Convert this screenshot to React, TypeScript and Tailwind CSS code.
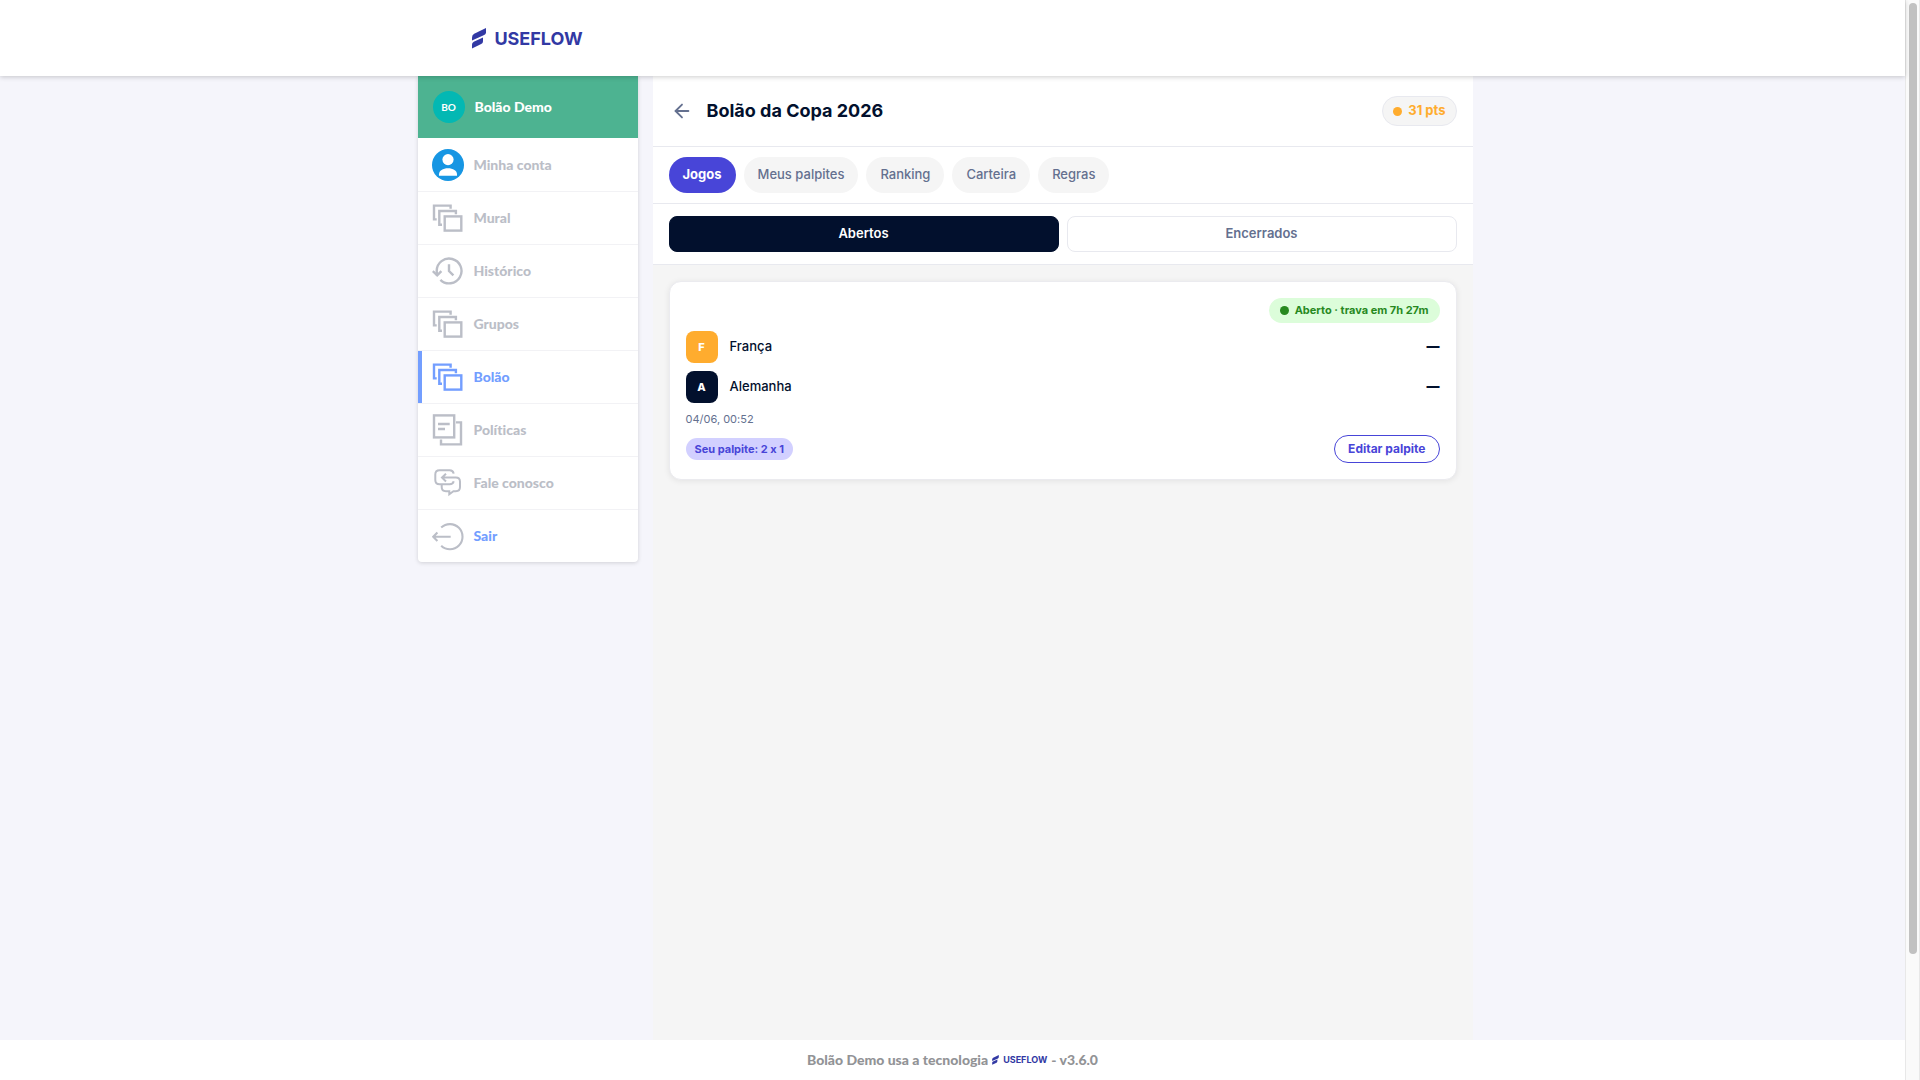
import { useState } from 'react'
import type { ReactNode } from 'react'
import { ArrowLeft } from 'lucide-react'
import clsx from 'clsx'

function LogoMark({ className }: { className?: string }) {
  return (
    <svg viewBox="0 0 14 21" className={className} fill="currentColor" aria-hidden>
      <path d="M0 12.6V9.4Q0 7 2.2 5.8L14 0v4.2Q14 6.2 12.2 7.1Z" />
      <path d="M0 20.6v-4Q0 14.6 1.8 13.7L11 9.4v3.8Q11 15.2 9.2 16.1Z" />
    </svg>
  )
}

function LineIcon({ children }: { children: ReactNode }) {
  return (
    <svg viewBox="0 0 32 32" className="size-8 shrink-0" fill="none" stroke="currentColor" strokeWidth="2.4" aria-hidden>
      {children}
    </svg>
  )
}

const stackIcon = (
  <LineIcon>
    <path d="M4.7 17.4H2V3.6h16.6v3.2" />
    <path d="M10 22.8H7.3V9h16.6v3.2" />
    <rect x="12.7" y="14.4" width="16.6" height="14.2" />
  </LineIcon>
)

const accountIcon = (
  <svg viewBox="0 0 32 32" className="size-8 shrink-0" aria-hidden>
    <circle cx="16" cy="16" r="16" fill="#1796e3" />
    <circle cx="16" cy="10.6" r="5.6" fill="#fff" />
    <path d="M7 26.8v-1.6c0-3.6 4-6 9-6s9 2.4 9 6v1.6z" fill="#fff" />
  </svg>
)

const historyIcon = (
  <LineIcon>
    <path d="M5 20.4 4.7 16A12.4 12.4 0 1 1 8.4 24.8" />
    <path d="M.8 16.2 5.2 20.4 9.4 16.2" />
    <path d="M17 9.3V16l4.4 4.4" />
  </LineIcon>
)

const policyIcon = (
  <LineIcon>
    <rect x="2" y="1.4" width="20.2" height="22" />
    <path d="M6 10h11.7M6 15h7M24 8.4h5v22H9v-5" />
  </LineIcon>
)

const chatIcon = (
  <LineIcon>
    <path
      strokeWidth="2"
      d="M21.7 6.6Q21 3.2 17.7 3.2H7.6Q3.3 3.2 3.3 7.4V13q0 4.3 4.3 4.3h10.1q3.3 0 4-3M14 6.8 10 10.6l4 3.8M10 10.6h13.8q4.2 0 4.2 4.2v5.3q0 4.2-4.2 4.2h-2.4l-4.1 2.9v-2.9h-3.4q-4.2 0-4.2-4.2v-2.8"
    />
  </LineIcon>
)

const exitIcon = (
  <LineIcon>
    <path strokeWidth="2.1" d="M9.2 7.6a12.6 12.6 0 1 1 0 18.2M18.7 16.7H1.4M5.4 12.4 1.2 16.7l4.2 4.3" />
  </LineIcon>
)

const menu = [
  { label: 'Minha conta', icon: accountIcon },
  { label: 'Mural', icon: stackIcon },
  { label: 'Histórico', icon: historyIcon },
  { label: 'Grupos', icon: stackIcon },
  { label: 'Bolão', icon: stackIcon, active: true },
  { label: 'Políticas', icon: policyIcon },
  { label: 'Fale conosco', icon: chatIcon },
  { label: 'Sair', icon: exitIcon, highlight: true },
]

const tabs = ['Jogos', 'Meus palpites', 'Ranking', 'Carteira', 'Regras']
const filters = ['Abertos', 'Encerrados']

const teams = [
  { name: 'França', initial: 'F', color: 'bg-[#ffac2e]' },
  { name: 'Alemanha', initial: 'A', color: 'bg-[#02102d]' },
]

function Header() {
  return (
    <header className="relative z-10 bg-white shadow-[0_1px_5px_rgba(0,0,0,0.2)]">
      <div className="mx-auto flex h-[76px] max-w-[1070px] items-center">
        <a href="#" className="flex w-[220px] items-center justify-center gap-2 pt-px text-[#3239a4]">
          <LogoMark className="h-[21px] w-[14px]" />
          <span className="text-lg font-bold">USEFLOW</span>
        </a>
      </div>
    </header>
  )
}

function Sidebar() {
  return (
    <nav className="w-[220px] shrink-0 self-start overflow-hidden rounded-b bg-white font-['Lato',sans-serif] text-sm font-black [font-variant-ligatures:none] shadow-[0_1px_4px_rgba(0,0,0,0.15)]">
      <div className="flex h-[62px] items-center gap-2.5 bg-[#4db391] px-[15px] text-white">
        <span className="flex size-8 items-center justify-center rounded-full bg-[#03b8b3] text-[10px] font-bold">BO</span>
        Bolão Demo
      </div>
      <ul className="pt-px">
        {menu.map((item) => (
          <li key={item.label} className="border-b border-[#f2f2f5] last:border-b-0">
            <a
              href="#"
              className={clsx(
                'flex h-[52px] items-center gap-2.5 border-l-4 pl-2.5',
                item.active ? 'border-[#739eff] text-[#739eff]' : 'border-transparent text-[#bbbec7]',
              )}
            >
              {item.icon}
              <span className={item.highlight ? 'text-[#739eff]' : undefined}>{item.label}</span>
            </a>
          </li>
        ))}
      </ul>
    </nav>
  )
}

function MatchCard() {
  return (
    <article className="rounded-xl border border-[#ebebef] bg-white p-4 shadow-[0_1px_6px_rgba(0,0,0,0.08)]">
      <div className="flex justify-end">
        <span className="flex h-[25px] items-center gap-1.5 rounded-full bg-[#dcfdda] px-[11px] text-[11px] font-bold text-[#27891f]">
          <span className="size-[9px] rounded-full bg-current" />
          Aberto · trava em 7h 27m
        </span>
      </div>
      <div className="mt-2 flex flex-col gap-2">
        {teams.map((team) => (
          <div key={team.name} className="flex items-center gap-3">
            <span
              className={clsx(
                'flex size-8 items-center justify-center rounded-lg text-[11px] font-extrabold text-white',
                team.color,
              )}
            >
              {team.initial}
            </span>
            <span className="flex-1 text-[13px] font-medium">{team.name}</span>
            <span className="text-[13px] font-black">—</span>
          </div>
        ))}
      </div>
      <p className="mt-2 text-[11px] leading-4 text-[#64708f]">04/06, 00:52</p>
      <div className="mt-2 flex items-center justify-between">
        <span className="flex h-[22px] items-center rounded-full bg-[#d2d0ff] px-[9px] text-[11px] font-bold text-[#4845d8]">
          Seu palpite: 2 x 1
        </span>
        <button
          type="button"
          className="h-7 rounded-full border border-[#4845d8] px-[13px] text-xs font-bold text-[#4845d8]"
        >
          Editar palpite
        </button>
      </div>
    </article>
  )
}

function Pool() {
  const [tab, setTab] = useState('Jogos')
  const [filter, setFilter] = useState('Abertos')

  return (
    <main className="min-w-0 flex-1 bg-[#f5f5f5] text-[#02102d] [font-feature-settings:'calt'_0]">
      <div className="flex h-[71px] items-center border-b border-[#e8e9ef] bg-white px-4">
        <button type="button" aria-label="Voltar" className="p-0.5 text-[#64708f]">
          <ArrowLeft size={22} />
        </button>
        <h1 className="ml-3 flex-1 text-lg font-bold">Bolão da Copa 2026</h1>
        <span className="flex h-[30px] items-center gap-1.5 rounded-full border border-[#e8e9ef] bg-[#f5f5f5] px-2.5 text-[13px] font-bold text-[#ffac2e]">
          <span className="size-[9px] rounded-full bg-current" />
          31 pts
        </span>
      </div>
      <div className="flex gap-2 border-b border-[#e8e9ef] bg-white px-4 py-2.5">
        {tabs.map((name) => (
          <button
            key={name}
            type="button"
            onClick={() => setTab(name)}
            className={clsx(
              'h-9 rounded-full px-3.5 text-[13px]',
              tab === name ? 'bg-[#4845d8] font-bold text-white' : 'bg-[#f5f5f5] font-medium text-[#64708f]',
            )}
          >
            {name}
          </button>
        ))}
      </div>
      <div className="grid grid-cols-2 gap-2 border-b border-[#e8e9ef] bg-white px-4 py-3">
        {filters.map((name) => (
          <button
            key={name}
            type="button"
            onClick={() => setFilter(name)}
            className={clsx(
              'h-9 rounded-lg border text-[13px] font-semibold',
              filter === name
                ? 'border-[#02102d] bg-[#02102d] text-white'
                : 'border-[#e8e9ef] bg-white text-[#64708f]',
            )}
          >
            {name}
          </button>
        ))}
      </div>
      <div className="p-4">
        <MatchCard />
      </div>
    </main>
  )
}

function Footer() {
  return (
    <footer className="flex h-10 items-center justify-center bg-white font-['Lato',sans-serif] text-sm font-black text-[#929396]">
      Bolão Demo usa a tecnologia
      <span className="mx-1 flex items-center gap-1 font-['Inter',sans-serif] text-[9px] font-bold text-[#3239a4]">
        <LogoMark className="h-[10px] w-[7px]" />
        USEFLOW
      </span>
      - v3.6.0
    </footer>
  )
}

export default function App() {
  return (
    <div className="flex bg-[#f5f5fb] font-['Inter',sans-serif]">
      <div className="flex min-h-screen min-w-0 flex-1 flex-col">
        <Header />
        <div className="mx-auto flex w-full max-w-[1070px] flex-1 gap-[15px] pr-[15px]">
          <Sidebar />
          <Pool />
        </div>
        <Footer />
      </div>
      <div className="sticky top-0 h-screen w-[15px] border-x border-[#e8e8e8] bg-[#fafafa] px-[3px] pt-[3px]" aria-hidden>
        <div className="mr-[-1px] h-[88.3%] rounded-full bg-[#c1c1c1]" />
      </div>
    </div>
  )
}
